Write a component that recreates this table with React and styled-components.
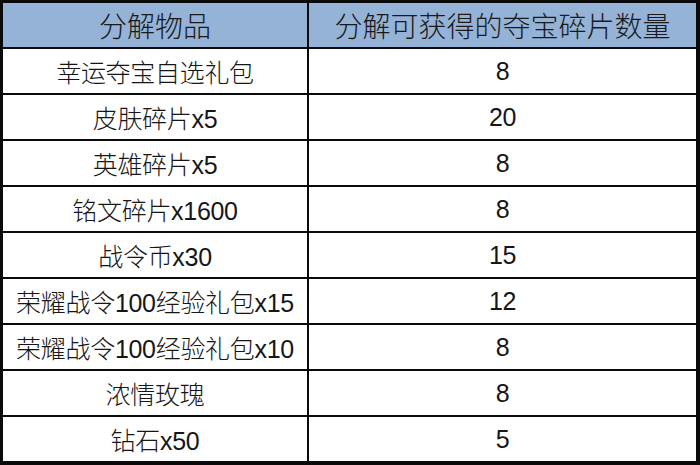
import React from 'react';
import styled, { createGlobalStyle } from 'styled-components';

const rows = [
  ['幸运夺宝自选礼包', '8'],
  ['皮肤碎片x5', '20'],
  ['英雄碎片x5', '8'],
  ['铭文碎片x1600', '8'],
  ['战令币x30', '15'],
  ['荣耀战令100经验礼包x15', '12'],
  ['荣耀战令100经验礼包x10', '8'],
  ['浓情玫瑰', '8'],
  ['钻石x50', '5'],
];

const App = () => {
  return (
    <>
      <GlobalStyle />
      <Table>
        <HeadCell>分解物品</HeadCell>
        <HeadCell>分解可获得的夺宝碎片数量</HeadCell>
        {rows.map(([item, count]) => (
          <React.Fragment key={item}>
            <Cell>{item}</Cell>
            <Cell>{count}</Cell>
          </React.Fragment>
        ))}
      </Table>
    </>
  );
};

export default App;

const GlobalStyle = createGlobalStyle`
  html, body {
    margin: 0;
    padding: 0;
    background: #ffffff;
  }
`;

const Table = styled.div`
  width: 700px;
  height: 465px;
  box-sizing: border-box;
  display: grid;
  grid-template-columns: 304px 387px;
  grid-template-rows: repeat(10, 44px);
  gap: 2px;
  padding: 3px 4px 4px 3px;
  background-color: #0a0a0a;
  font-family: 'Liberation Sans', 'Noto Sans CJK SC', sans-serif;
  font-weight: 300;
`;

const Cell = styled.div`
  display: flex;
  align-items: center;
  justify-content: center;
  background-color: #ffffff;
  color: #161616;
  font-size: 25px;
  white-space: nowrap;
  letter-spacing: -0.3px;
`;

const HeadCell = styled(Cell)`
  background-color: #95b3d7;
  color: #1a1a1a;
  font-size: 28px;
  letter-spacing: 0;
`;
